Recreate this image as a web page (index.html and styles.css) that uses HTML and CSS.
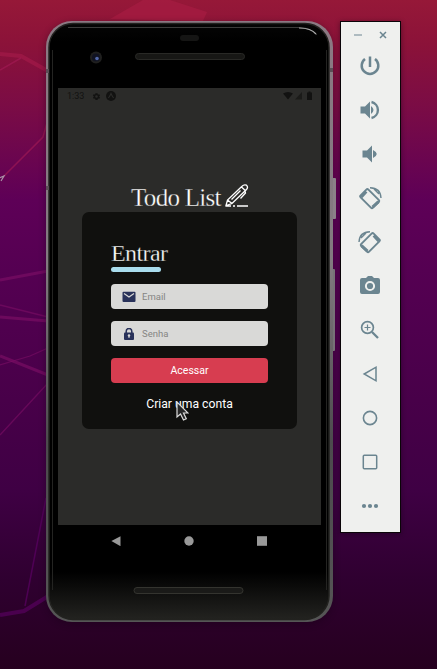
FILE: index.html
```html
<!DOCTYPE html>
<html lang="pt-BR">
<head>
<meta charset="utf-8">
<title>Todo List</title>
<link rel="stylesheet" href="styles.css">
</head>
<body>
<svg class="wallpaper" viewBox="0 0 437 669" fill="none" aria-hidden="true">
  <path d="M110 19 143 0h27l37 12-4 9z" fill="#a51c41" opacity=".75"/>
  <path d="M0 54 21 56 48 71" stroke="#a31a48" stroke-width="4" opacity=".7"/>
  <path d="M0 70 21 58M48 119 43 137 2 178" stroke="#a31a54" stroke-width="1.5" opacity=".65"/>
  <path d="M0 280 48 271M0 317 48 321M0 356 48 375" stroke="#7d0e66" stroke-width="3" opacity=".65"/>
  <path d="M0 305 48 317M0 365 30 356 48 348M0 435 48 383" stroke="#7d0e66" stroke-width="1.3" opacity=".6"/>
  <path d="M46 498 25 606" stroke="#5b0064" stroke-width="1.5" opacity=".7"/>
  <path d="M0 615 24 611 50 595" stroke="#54005b" stroke-width="4" opacity=".75"/>
  <path d="M-1 178 4 176 1 181" stroke="#a994a9" stroke-width="1.2"/>
</svg>
<main class="desktop">
  <section class="phone">
    <svg class="hardware" viewBox="46 21 292 603" fill="none" aria-hidden="true">
      <defs>
        <linearGradient id="edge" x1="0" y1="0" x2="0" y2="1"><stop offset="0" stop-color="#8b7983"/><stop offset=".4" stop-color="#827a80"/><stop offset=".7" stop-color="#4c4a4d"/><stop offset="1" stop-color="#555"/></linearGradient>
        <linearGradient id="face" x1="0" y1="0" x2="0" y2="1"><stop offset="0" stop-color="#050505"/><stop offset=".03" stop-color="#000"/><stop offset=".92" stop-color="#000"/><stop offset="1" stop-color="#232320"/></linearGradient>
      </defs>
      <rect x="332" y="178" width="4" height="41" rx="1" fill="#8b8188"/>
      <rect x="332" y="269" width="3" height="82" rx="1" fill="#777177"/>
      <rect x="46" y="21" width="287" height="601" rx="26" fill="url(#edge)"/>
      <rect x="49" y="23.500" width="280" height="596" rx="24" fill="url(#face)" stroke="#22221f" stroke-width="1.5"/>
      <path d="M52.500 50v540" stroke="#242422"/>
      <path d="M326.500 50v540" stroke="#242422"/>
      <path d="M68 27.500H300Q311 28 317 35" stroke="#3c3c3b" stroke-width="1"/>
      <path d="M299 28Q311 28 316 34" stroke="#aaa" stroke-width="1.2"/>
      <path d="M46 71h3M330 70h3M46 188h3" stroke="#5a4e56" stroke-width="4"/>
      <rect x="180" y="35" width="19" height="6" rx="3" fill="#151514"/>
      <rect x="135.500" y="53.500" width="109" height="6" rx="3" fill="#171715" stroke="#292926"/>
      <circle cx="96" cy="57.500" r="6" fill="#20201f"/><circle cx="96" cy="57.500" r="4" fill="#111322"/><circle cx="97" cy="58.500" r="1.800" fill="#5267a8"/>
      <rect x="134" y="587.500" width="109" height="6" rx="3" fill="#1a1a18" stroke="#34342f"/>
    </svg>
    <div class="screen">
      <header class="status">
        <span class="clock">1:33</span>
        <svg class="gear" viewBox="0 0 24 24"><path fill-rule="evenodd" d="M19.400 13a7.500 7.500 0 0 0 0-2l2.100-1.600-2-3.500-2.500 1a8 8 0 0 0-1.700-1L15 3H9l-.4 2.900a8 8 0 0 0-1.700 1l-2.500-1-2 3.500L4.600 11a7.500 7.500 0 0 0 0 2l-2.100 1.600 2 3.500 2.500-1a8 8 0 0 0 1.700 1L9 21h6l.4-2.900a8 8 0 0 0 1.700-1l2.500 1 2-3.500zM12 15.500a3.500 3.500 0 1 1 0-7 3.500 3.500 0 0 1 0 7z"/></svg>
        <svg class="expo" viewBox="0 0 10 10"><circle cx="5" cy="5" r="5"/><path d="M2.400 7Q4 5 5 2.500 6 5 7.600 7" fill="none" stroke="#2b2b29" stroke-width="1.100"/></svg>
        <svg class="signals" viewBox="0 0 30 10"><path d="M0 2.500Q5-.5 10 2.500L5 8.500z"/><path d="M19 1v7.500h-7z" opacity=".65"/><path d="M25.500.5h2v1H29V9h-5V1.500h1.500z"/></svg>
      </header>
      <div class="brand">
        <h1>Todo List</h1>
        <svg class="pencil" viewBox="0 0 24 24"><path d="M1 21.500 2.500 16 17 2.300Q19 .2 21.500 1.200 23.500 3 21.500 5.500L7 19.500zM2.500 16 7 19.500M16.500 3l4 3.700M20 7 20.500 9 15.500 14.500M6.500 15.500 15.500 6.500M1 22h5M8 22h2M12 22h11"/></svg>
      </div>
      <form class="card">
        <h2>Entrar</h2>
        <div class="field"><svg viewBox="0 0 14 12"><rect x=".5" y=".7" width="13" height="10.300" rx="1"/><path d="M2 2.600 7 6l5-3.400" fill="none" stroke="#d9d9d7" stroke-width="1.200"/></svg><span>Email</span></div>
        <div class="field"><svg viewBox="0 0 14 12"><path d="M4.200 5V3.300a2.800 2.800 0 0 1 5.600 0V5" fill="none" stroke="#29325a" stroke-width="1.500"/><rect x="2" y="4.500" width="10" height="7.500" rx="1"/><circle cx="7" cy="7.500" r="1.200" fill="#d9d9d7"/><path d="M7 8v2" stroke="#d9d9d7"/></svg><span>Senha</span></div>
        <div class="submit">Acessar</div>
        <div class="signup">Criar uma conta
          <svg class="cursor" viewBox="0 0 13 20"><path d="M1 1v15l3.500-3 3 6 2.800-1.300L7.500 12H12z" fill="#282828" stroke="#ddd" stroke-width="1.200"/></svg>
        </div>
      </form>
    </div>
    <nav class="softkeys">
      <svg viewBox="0 0 10 10"><path d="M.4 5 9.500.2v10z"/></svg>
      <svg viewBox="0 0 10 10"><circle cx="5" cy="5" r="4.700"/></svg>
      <svg viewBox="0 0 10 10"><path d="M0 .2h10v9.600H0z"/></svg>
    </nav>
  </section>
  <aside class="tools">
    <div class="window-actions">
      <svg viewBox="0 0 8 8"><path d="M0 4h8" opacity=".65"/></svg>
      <svg viewBox="0 0 8 8"><path d="m1 1 6 6M7 1 1 7"/></svg>
    </div>
    <svg viewBox="0 0 24 24"><path class="line" d="M12 2.500v10.500M7 5a8.300 8.300 0 1 0 10 0" stroke-width="2.500"/></svg>
    <svg viewBox="0 0 24 24"><path d="M2.500 8.500H7L12 3.500v17l-5-5H2.500zM13 8q5 4 0 8z"/><path class="line" d="M13.500 4a8.200 8.200 0 0 1 0 16" stroke-width="2.400"/></svg>
    <svg viewBox="0 0 24 24"><path d="M4.500 8.500H9L14 3.500v17l-5-5H4.500zM15 8q7.500 4 0 8z"/></svg>
    <svg viewBox="0 0 24 24"><g class="line"><rect x="6.200" y="3.900" width="11" height="17.500" rx="1.500" transform="rotate(-45 11.700 12.700)" stroke-width="1.900"/><path d="m3.300 11 5-5.500M14.500 21.200l6-5.500" stroke-width="3"/><path d="M12 1.800Q22.500 2 23 12M16 3l5 5" stroke-width="1.400"/></g></svg>
    <svg viewBox="0 0 24 24"><g class="line" transform="matrix(-1 0 0 1 24 0)"><rect x="6.200" y="3.900" width="11" height="17.500" rx="1.500" transform="rotate(-45 11.700 12.700)" stroke-width="1.900"/><path d="m3.300 11 5-5.500M14.500 21.200l6-5.500" stroke-width="3"/><path d="M12 1.800Q22.500 2 23 12M16 3l5 5" stroke-width="1.400"/></g></svg>
    <svg viewBox="0 0 24 24"><path d="M4 4h4L10 2h4l2 2h4q2 0 2 2v12q0 2-2 2H4q-2 0-2-2V6q0-2 2-2z"/><circle cx="12" cy="12" r="4.100" fill="#6b8590" stroke="#eff0ee" stroke-width="2"/></svg>
    <svg viewBox="0 0 24 24"><g class="line"><circle cx="9.500" cy="9.500" r="5.900" stroke-width="1.700"/><path d="m14 14 6 6" stroke-width="2.300"/><path d="M9.500 6.500v6M6.500 9.500h6" stroke-width="1.200"/></g></svg>
    <svg viewBox="0 0 24 24"><path class="line" d="M6.200 12 18 5.200v13.600z" stroke-width="1.500"/></svg>
    <svg viewBox="0 0 24 24"><circle class="line" cx="12" cy="12" r="6.600" stroke-width="1.600"/></svg>
    <svg viewBox="0 0 24 24"><rect class="line" x="5.300" y="5.300" width="13.400" height="13.400" rx="1" stroke-width="1.500"/></svg>
    <svg viewBox="0 0 24 24"><circle cx="6" cy="12" r="2.100"/><circle cx="12" cy="12" r="2.100"/><circle cx="18" cy="12" r="2.100"/></svg>
  </aside>
</main>
</body>
</html>
```
FILE: styles.css
```css
* { box-sizing: border-box; }

body {
  margin: 0;
  height: 669px;
  overflow: hidden;
  position: relative;
  font-family: Roboto, "Liberation Sans", sans-serif;
  background: linear-gradient(#961838 0, #8b1239 45px, #7b0c45 105px, #5e0057 200px, #550052 270px, #480049 400px, #3f0044 490px, #2f0030 580px, #26001f 669px);
}

svg { display: block; flex: none; }
h1, h2 { margin: 0; font-family: "Liberation Serif", serif; font-weight: 400; color: #fff; }

.wallpaper { position: absolute; inset: 0; width: 437px; height: 669px; }
.desktop { position: relative; display: flex; align-items: flex-start; padding: 21px 0 0 46px; }

.phone { position: relative; width: 287px; height: 601px; padding: 67px 12px 0; border-radius: 26px; box-shadow: 0 2px 7px rgba(20, 0, 20, .4); }
.hardware { position: absolute; left: 0; top: 0; width: 292px; height: 603px; }

.screen { position: relative; height: 437px; background: #2b2b29; }
.status { display: flex; align-items: center; height: 16px; padding: 0 8px 0 9px; fill: #121211; }
.clock { width: 18px; margin-right: 7px; font-size: 9px; line-height: 16px; color: #121211; }
.gear { width: 9px; height: 9px; margin-right: 5px; }
.expo { width: 10px; height: 10px; }
.signals { width: 30px; height: 10px; margin-left: auto; }

.brand { display: flex; margin: 80px 0 0 73px; height: 28px; }
h1 { width: 94px; font-size: 25px; line-height: 28px; letter-spacing: -.7px; white-space: nowrap; -webkit-text-stroke: .3px #2b2b29; }
.pencil { width: 24px; height: 24px; fill: none; stroke: #fff; stroke-width: 1.3; }

.card { display: flex; flex-direction: column; gap: 12px; width: 215px; height: 217px; margin-left: 24px; padding: 29px 29px 0; border-radius: 7px; background: #10100e; }
h2 { height: 31px; font-size: 24px; line-height: 25px; letter-spacing: -.6px; -webkit-text-stroke: .3px #10100e; }
h2::after { content: ""; display: block; width: 50px; height: 5px; margin-top: 1px; border-radius: 3px; background: #a9dced; }
.field { display: flex; align-items: center; height: 25px; padding-left: 11px; border-radius: 4px; background: #d9d9d7; color: #858583; font-size: 9.5px; }
.field svg { width: 14px; height: 12px; margin-right: 6px; fill: #29325a; }
.submit { height: 25px; border-radius: 4px; background: #d73d50; color: #fff; font-size: 10.5px; line-height: 25px; text-align: center; }
.signup { position: relative; height: 18px; color: #fff; font-size: 12.2px; line-height: 18px; text-align: center; white-space: nowrap; }
.cursor { position: absolute; left: 65px; top: 6px; width: 13px; height: 20px; }

.softkeys { position: relative; display: flex; gap: 63px; padding: 11px 0 0 53px; fill: #999; }
.softkeys svg { width: 10px; height: 10px; }

.tools { display: flex; flex-direction: column; align-items: center; width: 61px; height: 512px; margin-left: 7px; padding-right: 1px; border: 1px solid #0b0408; background: #eff0ee; fill: #6b8590; box-shadow: 0 1px 5px rgba(20, 0, 20, .45); }
.window-actions { display: flex; gap: 17px; align-items: center; height: 26px; margin-bottom: -4px; stroke: #6b8590; stroke-width: 1.5; }
.window-actions svg { width: 8px; height: 8px; }
.tools > svg { width: 24px; height: 24px; margin: 10px 0; }
.line { fill: none; stroke: #6b8590; }
```
